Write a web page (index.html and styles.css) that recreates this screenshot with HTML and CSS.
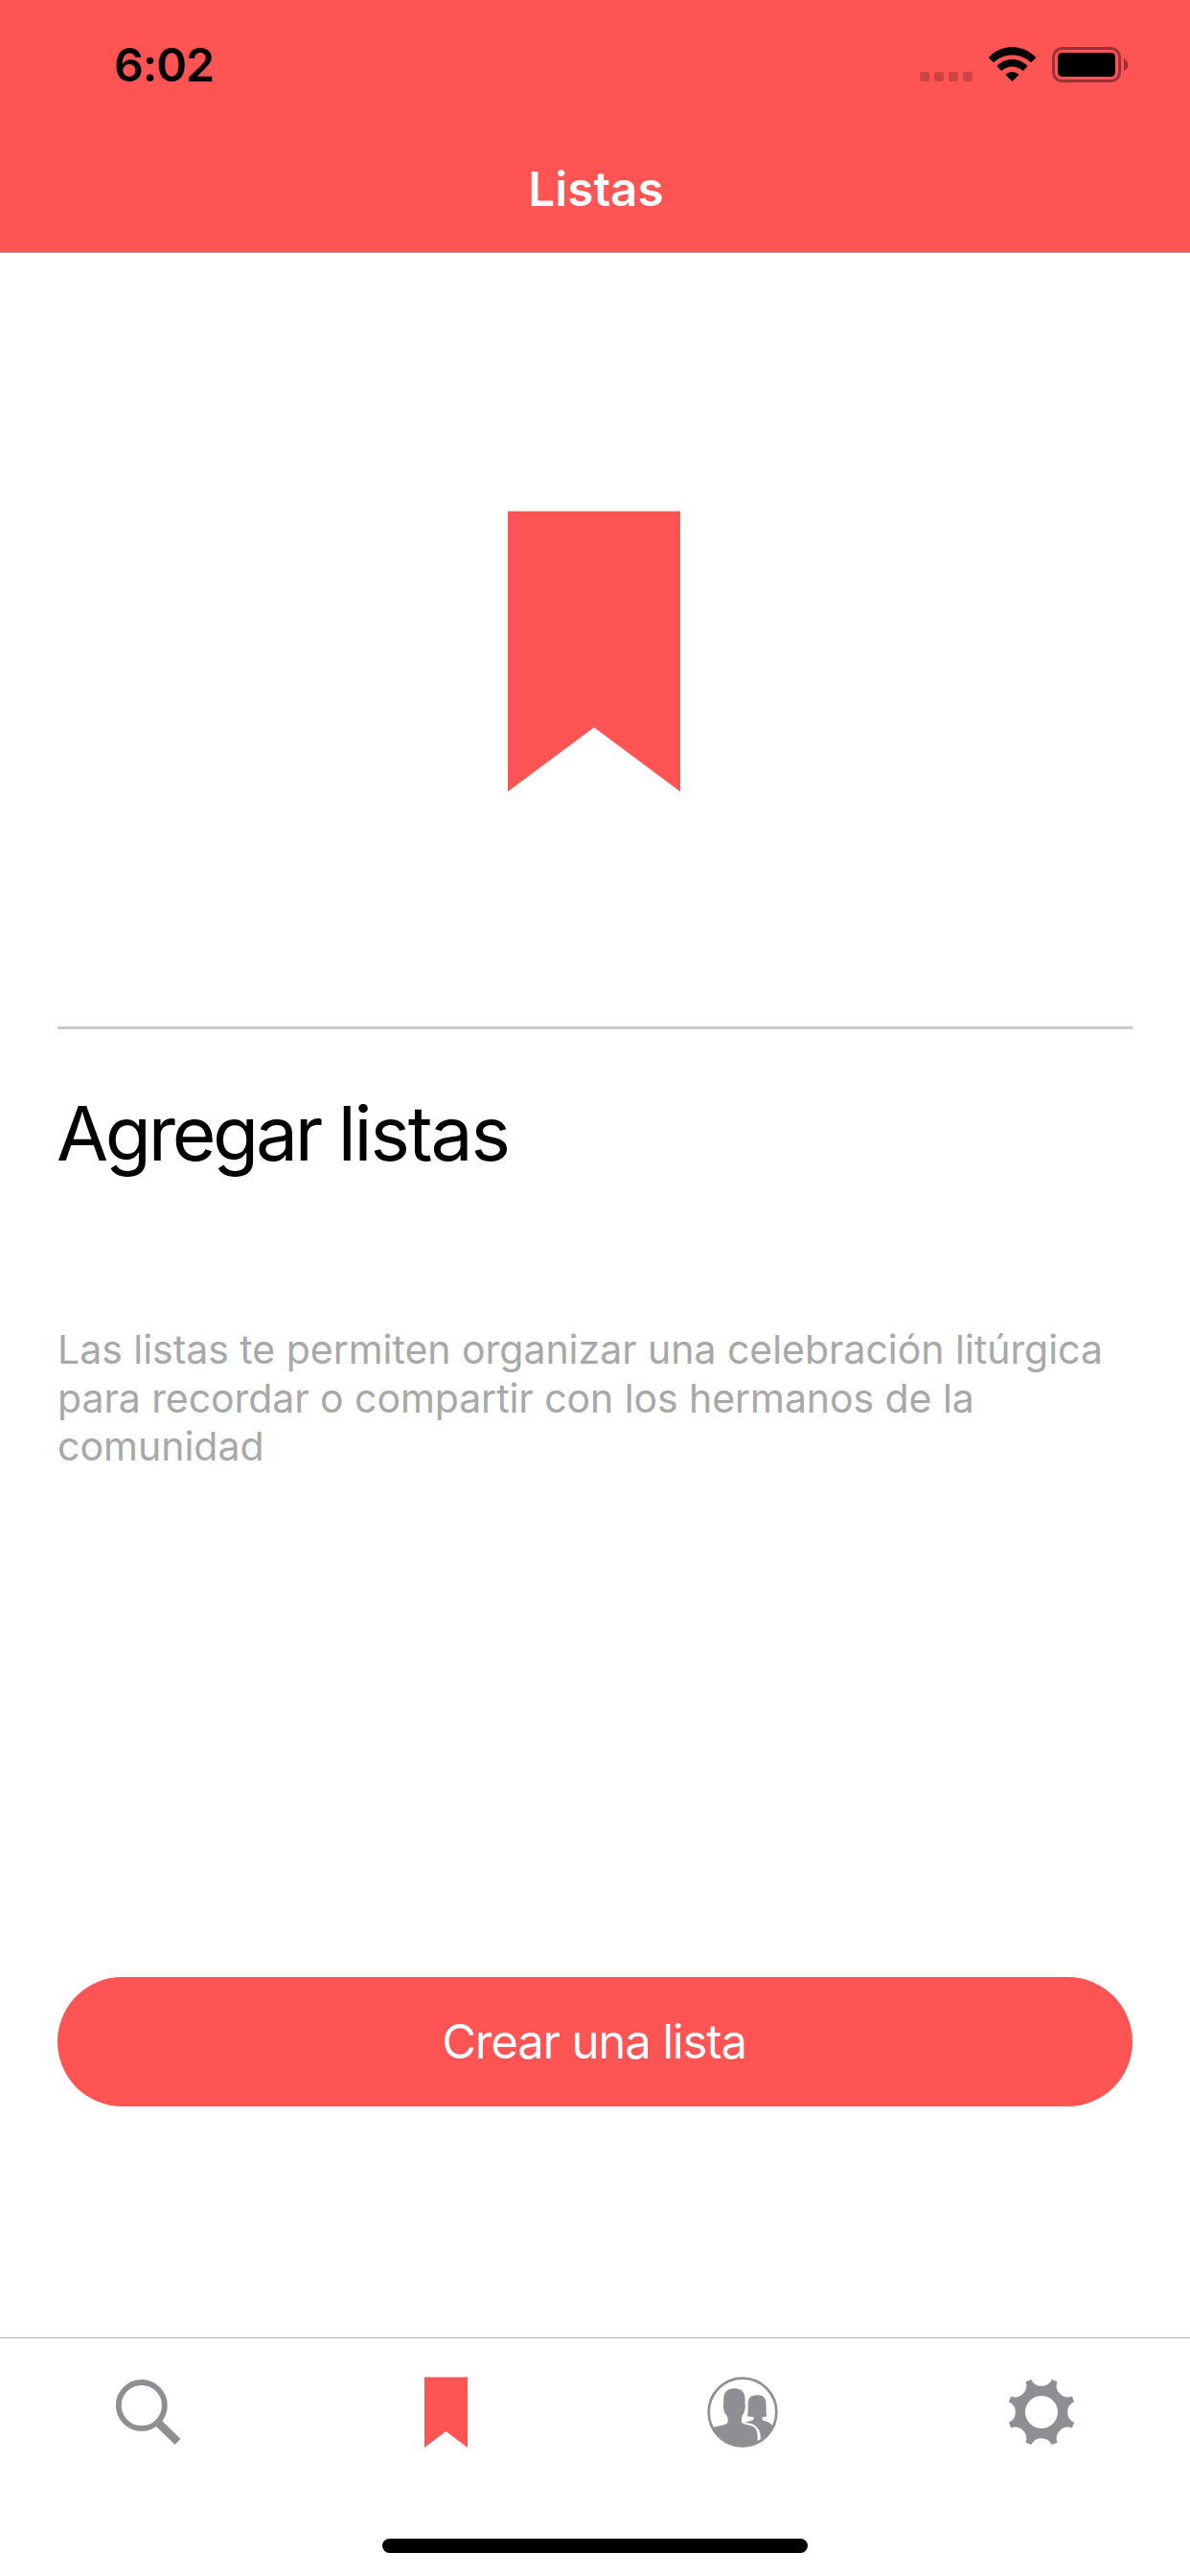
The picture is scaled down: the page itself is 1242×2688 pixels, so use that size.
FILE: index.html
```html
<!DOCTYPE html>
<html lang="es">
<head>
<meta charset="utf-8">
<title>Listas</title>
<link rel="stylesheet" href="styles.css">
</head>
<body>
<div class="screen">
  <header class="header">
    <div class="status">
      <span class="time">6:02</span>
      <div class="indicators">
        <span class="dots"><i></i><i></i><i></i><i></i></span>
        <svg class="wifi" viewBox="0 0 49 36">
          <path d="M0 11.6 Q0 10.8 .6 10.3 C14-3.3 35-3.3 48.4 10.3 Q49 10.8 49 11.6 L44 16.3 C33 6 16 6 5 16.3Z"/>
          <path d="M8.4 20 C17 10.8 32 10.8 40.6 20 L35.7 25 C29.5 19 19.5 19 13.3 25Z"/>
          <path d="M17.5 29 C21.5 25 27.5 25 31.5 29 L24.5 36Z"/>
        </svg>
        <svg class="battery" viewBox="0 0 80 37">
          <rect x="1.5" y="1.5" width="69" height="34" rx="9" fill="none" stroke="#000" stroke-opacity=".4" stroke-width="3"/>
          <rect x="6" y="6" width="60" height="25" rx="4.5"/>
          <path d="M75 12 Q79.2 14 79.2 18.5 T75 25Z" fill-opacity=".4"/>
        </svg>
      </div>
    </div>
    <h1 class="title">Listas</h1>
  </header>
  <main class="content">
    <svg class="hero" viewBox="0 0 180 293"><path d="M0 .5H180V293L90 226 0 293Z"/></svg>
    <hr class="rule">
    <h2 class="heading">Agregar <span class="loose">listas</span></h2>
    <p class="description"><span class="l1">Las listas te permiten organizar una celebración litúrgica</span> <span class="l2">para recordar o compartir con los hermanos de la</span> <span class="l3">comunidad</span></p>
    <button class="create" type="button">Crear una lista</button>
  </main>
  <nav class="tabs">
    <svg class="tab search" viewBox="0 0 68 68"><circle cx="26.8" cy="27" r="24" fill="none" stroke="#8e8e93" stroke-width="5.8"/><path d="M43.5 44.5 64.5 65" stroke="#8e8e93" stroke-width="8.5"/></svg>
    <svg class="tab mark" viewBox="0 0 45 74"><path d="M0 .5H45V74L22.5 57 0 74Z"/></svg>
    <svg class="tab people" viewBox="55 61 222 222">
      <defs><clipPath id="disc"><circle cx="166" cy="172" r="109"/></clipPath></defs>
      <g clip-path="url(#disc)">
        <path d="M55 228C84 212 112 216 119 205C122 197 120 187 115 180C110 178 107 166 106 157C105 152 105 149 107 147C105 121 108 98 140 98C172 98 176 121 173 147C176 149 175 153 174 158C173 168 170 178 166 181C163 188 162 197 163 204C174 214 194 209 206 223C213 232 213 246 213 258V290H55Z"/>
        <path d="M181 185C185 171 181 145 185 133C189 122 201 119 212 119C223 119 235 123 238 134C241 146 239 171 242 185C238 187 234 187 228 187C227 194 228 196 232 198C244 202 257 204 267 226V283H222C224 258 224 236 214 223C205 211 190 206 175 206C183 199 198 201 201 194L201 187C194 187 187 187 181 185Z"/>
      </g>
      <circle cx="166" cy="172" r="106" fill="none" stroke="#8e8e93" stroke-width="8"/>
    </svg>
    <svg class="tab gear" viewBox="-36 -36 72 72"><path fill-rule="evenodd" d="M-10.8-34.1A11.9 11.9 0 0 0 10.8-34.1L16.5-31.8A11.9 11.9 0 0 0 31.8-16.5L34.1-10.8A11.9 11.9 0 0 0 34.1 10.8L31.8 16.5A11.9 11.9 0 0 0 16.5 31.8L10.8 34.1A11.9 11.9 0 0 0-10.8 34.1L-16.5 31.8A11.9 11.9 0 0 0-31.8 16.5L-34.1 10.8A11.9 11.9 0 0 0-34.1-10.8L-31.8-16.5A11.9 11.9 0 0 0-16.5-31.8ZM17 0A17 17 0 1 0-17 0A17 17 0 1 0 17 0Z"/></svg>
  </nav>
  <footer class="home"><span></span></footer>
</div>
</body>
</html>
```
FILE: styles.css
```css
* { box-sizing: border-box; }
body { margin: 0; background: #fff; font-family: Inter, "Liberation Sans", sans-serif; }
.screen { width: 1242px; height: 2688px; display: flex; flex-direction: column; background: #fff; }
svg { display: block; flex: none; overflow: visible; }

.header { height: 264px; background: #ff5454; border-bottom: 1px solid #b89a9c; }
.status { height: 132px; display: flex; justify-content: space-between; padding: 38px 64px 0 119px; }
.time { font-size: 48px; line-height: 60px; font-weight: 600; letter-spacing: -0.9px; }
.indicators { display: flex; align-items: flex-start; padding-top: 11px; }
.dots { display: flex; gap: 5px; padding-top: 26px; margin-right: 17px; }
.dots i { width: 10px; height: 10px; border-radius: 3px; background: rgba(0, 0, 0, .2); }
.wifi { width: 49px; height: 36px; margin-right: 17px; }
.battery { width: 80px; height: 37px; }
.title { margin: 0; padding: 35px 0 0 2px; line-height: 60px; text-align: center; color: #fff; font-size: 49.5px; font-weight: 600; letter-spacing: 0; }

.content { flex: 1; display: flex; flex-direction: column; padding: 269px 60px 0; }
.hero { width: 180px; height: 293px; margin-left: 470px; fill: #ff5454; }
.rule { width: 100%; height: 3px; margin: 245px 0 0; border: 0; background: #c9c9c9; }
.heading { margin: 59px 0 0 -1px; font-size: 78.5px; line-height: 100px; font-weight: 400; letter-spacing: -3.3px; white-space: nowrap; }
.loose { letter-spacing: -2.2px; }
.description { margin: 150px 0 0; font-size: 41px; line-height: 50.5px; color: #a8a8a8; }
.description span { display: block; white-space: nowrap; }
.l1 { letter-spacing: -0.03px; }
.l2 { letter-spacing: -0.07px; }
.create { height: 135px; margin: 528px 0 0; padding: 1px 2px 0 0; border: 0; border-radius: 68px; background: #ff5454; color: #fff; font: 400 49px/60px Inter, "Liberation Sans", sans-serif; letter-spacing: -1.15px; }

.tabs { height: 150px; border-top: 1px solid #b2b2b2; display: flex; align-items: flex-start; fill: #8e8e93; }
.search { width: 68px; height: 68px; margin: 43px 0 0 121px; }
.mark { width: 45px; height: 74px; margin: 40px 0 0 254px; fill: #ff5454; }
.people { width: 74px; height: 74px; margin: 40px 0 0 250px; }
.gear { width: 72px; height: 72px; margin: 41px 0 0 239px; }

.home { height: 99px; padding-top: 60px; }
.home span { display: block; width: 444px; height: 15px; margin: 0 auto; border-radius: 8px; background: #000; }
```
